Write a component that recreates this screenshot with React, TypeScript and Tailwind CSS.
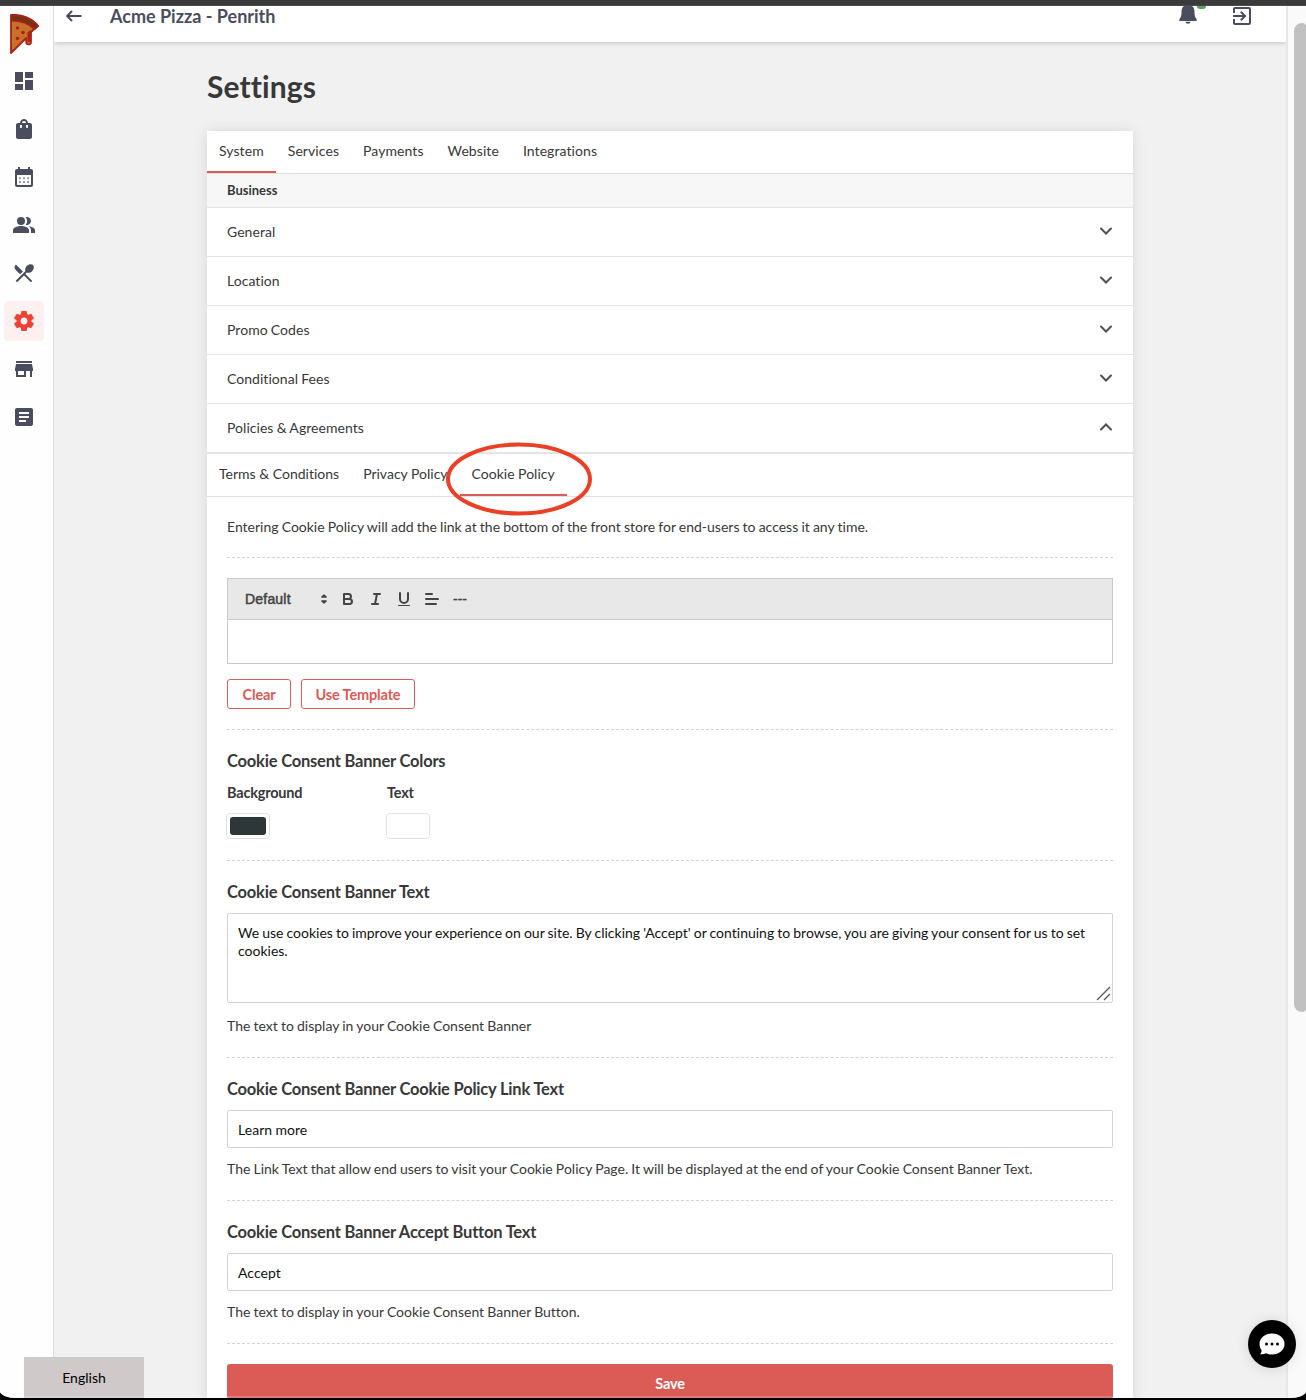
import type { ReactNode } from "react";
import {
  MdArticle,
  MdDashboard,
  MdExitToApp,
  MdPeopleAlt,
  MdRestaurantMenu,
  MdShoppingBag,
  MdStore,
} from "react-icons/md";

function PizzaLogo() {
  return (
    <svg className="h-[40px] w-[30px]" viewBox="0 0 30 40">
      <path d="M1 1C11 0 22 4 28 12L21 18V28A2.4 2.4 0 0 1 16.200 28V24L1 39Z" fill="#c9702a" stroke="#a82418" strokeWidth="1.800" strokeLinejoin="round" />
      <path d="M1.500 1.500C11 1 21 4.500 28 12L24.500 15C18 8.500 11 6.500 1.500 6.500Z" fill="#6d3512" stroke="#a82418" strokeWidth="1.800" />
      <path d="M21 17.500L19 19V28" fill="none" stroke="#a82418" strokeWidth="3" />
      <circle cx="7.500" cy="14" r="1.700" fill="#a82418" />
      <circle cx="13" cy="18.500" r="1.800" fill="#a82418" />
      <circle cx="7.500" cy="24.500" r="1.800" fill="#a82418" />
    </svg>
  );
}

function CalendarIcon({ size }: { size: number }) {
  return (
    <svg width={size} height={size} viewBox="0 0 24 24" fill="currentColor">
      <path fillRule="evenodd" d="M6 2H8V4H16V2H18V4H19A2 2 0 0 1 21 6V20A2 2 0 0 1 19 22H5A2 2 0 0 1 3 20V6A2 2 0 0 1 5 4H6ZM5 10V19.500Q5 20 5.500 20H18.500Q19 20 19 19.500V10Z" />
      <path opacity=".55" d="M7 12.200H9V14.200H7ZM11 12.200H13V14.200H11ZM15 12.200H17V14.200H15ZM7 16H9V18H7ZM11 16H13V18H11ZM15 16H17V18H15Z" />
    </svg>
  );
}

function GearIcon({ size }: { size: number }) {
  return (
    <svg width={size} height={size} viewBox="0 0 24 24" fill="currentColor">
      <path d="M19.500 12c0-.23-.01-.45-.03-.68l1.860-1.410c.4-.3.51-.86.26-1.300l-1.870-3.230a.987.987 0 0 0-1.250-.42l-2.150.91c-.37-.26-.76-.49-1.170-.68l-.29-2.310c-.06-.5-.49-.88-.99-.88h-3.730c-.51 0-.94.38-1 .88l-.29 2.310c-.41.19-.8.42-1.170.68l-2.150-.91c-.46-.2-1-.02-1.250.42L2.410 8.620c-.25.44-.14.99.26 1.300l1.860 1.410a7.343 7.343 0 0 0 0 1.350l-1.860 1.410c-.4.3-.51.86-.26 1.300l1.870 3.230c.25.44.79.62 1.250.42l2.150-.91c.37.26.76.49 1.170.68l.29 2.310c.06.5.49.88.99.88h3.730c.5 0 .93-.38.99-.88l.29-2.310c.41-.19.8-.42 1.170-.68l2.150.91c.46.2 1 .02 1.250-.42l1.870-3.230c.25-.44.14-.99-.26-1.300l-1.860-1.410c.03-.23.04-.45.04-.68zm-7.460 3.500c-1.930 0-3.500-1.570-3.500-3.500s1.570-3.500 3.500-3.500 3.500 1.570 3.500 3.500-1.570 3.500-3.500 3.500z" />
    </svg>
  );
}

const navIcons = [MdDashboard, MdShoppingBag, CalendarIcon, MdPeopleAlt, MdRestaurantMenu, GearIcon, MdStore, MdArticle];

function Sidebar() {
  return (
    <aside className="flex w-[54px] shrink-0 flex-col border-r border-[#dcdcdc] bg-[#fefefe] pt-[8px]">
      <div className="mb-[7px] h-[40px] pl-[10px]"><PizzaLogo /></div>
      <nav className="flex flex-col gap-2 pl-1">
        {navIcons.map((Icon, i) => (
          <a key={i} className={i === 5 ? "flex size-10 items-center justify-center rounded-[4px] bg-[#fdf1f0] text-[#ea4335]" : "flex size-10 items-center justify-center text-[#4a4d5e]"}>
            <Icon size={24} />
          </a>
        ))}
      </nav>
    </aside>
  );
}

function Header() {
  return (
    <header className="relative z-10 flex h-[36px] items-start bg-white text-[#4a4d5e] shadow-[0_1px_5px_rgba(0,0,0,0.2)]">
      <svg className="mt-[2px] ml-[12px] h-4 w-4" viewBox="0 0 16 16" fill="none" stroke="currentColor" strokeWidth="2">
        <path d="M15.500 8H1.500M6 3L1.200 8L6 13" />
      </svg>
      <h2 className="ml-[28px] -mt-px text-[18px] leading-[22px] font-bold [word-spacing:0px]">Acme Pizza - Penrith</h2>
      <div className="relative ml-auto h-6 w-6 overflow-hidden">
        <svg className="absolute -top-px left-[3px]" width="18" height="19" viewBox="0 0 18 21" preserveAspectRatio="none" fill="currentColor">
          <path d="M9 0C4 0 2.500 3.500 2.500 7.500C2.500 11.500 2.200 13 .5 15.500C-.2 17 .2 17.600 1.200 17.600H16.800C17.800 17.600 18.200 17 17.500 15.500C15.800 13 15.500 11.500 15.500 7.500C15.500 3.500 14 0 9 0ZM6.500 18.600A2.500 2.200 0 0 0 11.500 18.600Z" />
        </svg>
      </div>
      <span className="-ml-[3px] h-[3px] w-[9px] rounded-b-full bg-[#59a354]" />
      <MdExitToApp size={24} className="mr-[32px] ml-[24px] -mt-[2px]" />
    </header>
  );
}

function Tabs({ items, active }: { items: string[]; active: number }) {
  return (
    <div className="flex h-[43px] border-b border-[#dfdfdf]">
      {items.map((t, i) => (
        <button key={t} className={i === active ? "h-[42px] border-b-2 border-[#db5b56] px-3 pb-px" : "h-[42px] border-b-2 border-transparent px-3 pb-px"}>
          {t}
        </button>
      ))}
    </div>
  );
}

function Chevron({ up }: { up: boolean }) {
  return (
    <svg width="24" height="24" viewBox="0 0 24 24" fill="none" stroke="#505050" strokeWidth="2" strokeLinecap="round" className={up ? "rotate-180" : ""}>
      <path d="M7 9.500L12 14.500L17 9.500" />
    </svg>
  );
}

function Row({ label, open = false }: { label: string; open?: boolean }) {
  return (
    <div className="flex h-[49px] items-center justify-between border-b border-[#e4e4e4] pr-[15px] pl-5">
      <span className="pb-px leading-5 tracking-[0.04px]">{label}</span>
      <span className="-mt-[2px]"><Chevron up={open} /></span>
    </div>
  );
}

function Editor() {
  return (
    <div className="border border-[#c9c9c9]">
      <div className="flex h-[41px] items-center border-b border-[#c9c9c9] bg-[#e8e8e8] pl-[17px] text-[#444]">
        <span className="w-[70px] font-['Liberation_Sans',sans-serif] text-[14px] tracking-[0.2px] [-webkit-text-stroke:0.5px_#444]">Default</span>
        <svg width="18" height="18" viewBox="0 0 18 18" fill="#444" stroke="#444" strokeWidth="1.400" strokeLinejoin="round" className="mr-[6px]">
          <path d="M6.800 11L9 13L11.200 11ZM6.800 7L9 5L11.200 7Z" />
        </svg>
        <div className="flex gap-[10px]">
          <svg width="18" height="18" viewBox="0 0 18 18" fill="none" stroke="#444" strokeWidth="2">
            <path d="M5 4H9.500A2.500 2.500 0 0 1 9.500 9H5ZM5 9H10.500A2.500 2.500 0 0 1 10.500 14H5Z" strokeLinejoin="round" />
          </svg>
          <svg width="18" height="18" viewBox="0 0 18 18" fill="none" stroke="#444" strokeWidth="2" strokeLinecap="round">
            <path d="M7 4H13M5 14H11M8 14L10 4" />
          </svg>
          <svg width="18" height="18" viewBox="0 0 18 18" fill="none" stroke="#444" strokeWidth="2" strokeLinecap="round">
            <path d="M5 3V9A4 4 0 0 0 13 9V3" />
            <path d="M3.500 15.500H14.500" strokeWidth="1" />
          </svg>
          <svg width="18" height="18" viewBox="0 0 18 18" fill="none" stroke="#444" strokeWidth="2" strokeLinecap="round">
            <path d="M3 9H15M3 14H13M3 4H9" />
          </svg>
          <span className="pl-[2px] font-['Liberation_Sans',sans-serif] text-[14px] leading-[18px] [-webkit-text-stroke:0.3px_#444]">---</span>
        </div>
      </div>
      <div className="h-[43px] bg-white" />
    </div>
  );
}

function Section({ className, children }: { className: string; children: ReactNode }) {
  return <section className={`mx-5 border-b border-dashed border-[#d3d3d3] ${className}`}>{children}</section>;
}

function Title({ children }: { children: ReactNode }) {
  return <h3 className="text-[16.5px] leading-[22px] font-bold tracking-[-0.2px] [word-spacing:0px]">{children}</h3>;
}

function TextField({ title, value, help }: { title: string; value: string; help: string }) {
  return (
    <Section className="h-[143px] pt-5">
      <Title>{title}</Title>
      <div className="mt-[10px] flex h-[38px] items-center rounded-[2px] border border-[#d3d3d3] px-[10px] tracking-[0.05px] text-[#111]">{value}</div>
      <p className="mt-[11px] leading-5">{help}</p>
    </Section>
  );
}

function Swatch({ label, dark = false }: { label: string; dark?: boolean }) {
  return (
    <div className="w-[160px]">
      <div className="text-[14.5px] leading-5 font-bold tracking-[-0.2px]">{label}</div>
      <div className="mt-[10px] -ml-px h-[26px] w-[44px] rounded-[4px] border border-[#e2e2e2] bg-white p-[3px]">
        <div className={dark ? "h-[18px] w-[36px] rounded-[3px] bg-[#2d3639]" : "h-[18px] w-[36px] rounded-[3px] bg-white"} />
      </div>
    </div>
  );
}

function SettingsCard() {
  return (
    <div className="relative mt-[25px] h-[1300px] w-[926px] bg-white shadow-[0_0_14px_rgba(0,0,0,0.1)]">
      <div className="tracking-[0.08px]">
        <Tabs items={["System", "Services", "Payments", "Website", "Integrations"]} active={0} />
      </div>
      <div className="flex h-[34px] items-center border-b border-[#e4e4e4] bg-[#f7f7f7] pl-5 text-[13px] font-bold">Business</div>
      <Row label="General" />
      <Row label="Location" />
      <Row label="Promo Codes" />
      <Row label="Conditional Fees" />
      <Row label="Policies & Agreements" open />
      <div className="border-t border-[#e4e4e4]">
        <Tabs items={["Terms & Conditions", "Privacy Policy", "Cookie Policy"]} active={2} />
      </div>
      <svg className="absolute top-[310px] left-[238px]" width="148" height="76" viewBox="0 0 148 76" fill="none" stroke="#ea4025" strokeWidth="4">
        <ellipse cx="74" cy="38" rx="71" ry="34.500" />
      </svg>
      <Section className="h-[61px] pt-5">
        <p className="leading-5">Entering Cookie Policy will add the link at the bottom of the front store for end-users to access it any time.</p>
      </Section>
      <Section className="h-[172px] pt-5">
        <Editor />
        <div className="mt-[15px] flex gap-[10px] text-[14.5px] font-bold tracking-[-0.15px] text-[#db5b56]">
          <button className="h-[30px] w-[64px] rounded-[3px] border border-[#db5b56] pt-[2px]">Clear</button>
          <button className="h-[30px] w-[114px] rounded-[3px] border border-[#db5b56] pt-[2px]">Use Template</button>
        </div>
      </Section>
      <Section className="h-[131px] pt-5">
        <Title>Cookie Consent Banner Colors</Title>
        <div className="mt-[11px] flex">
          <Swatch label="Background" dark />
          <Swatch label="Text" />
        </div>
      </Section>
      <Section className="h-[197px] pt-5">
        <Title>Cookie Consent Banner Text</Title>
        <div className="relative mt-[10px] h-[90px] rounded-[2px] border border-[#d3d3d3] px-[10px] pt-[10px] leading-[18px] [word-spacing:-0.52px] text-[#111]">
          We use cookies to improve your experience on our site. By clicking 'Accept' or continuing to browse, you are giving your consent for us to set<br />cookies.
          <svg className="absolute right-px bottom-px" width="15" height="15" viewBox="0 0 15 15" stroke="#555" strokeWidth="1.300">
            <path d="M1 14L14 1M8 14L14 8" />
          </svg>
        </div>
        <p className="mt-[13px] leading-5">The text to display in your Cookie Consent Banner</p>
      </Section>
      <TextField title="Cookie Consent Banner Cookie Policy Link Text" value="Learn more" help="The Link Text that allow end users to visit your Cookie Policy Page. It will be displayed at the end of your Cookie Consent Banner Text." />
      <TextField title="Cookie Consent Banner Accept Button Text" value="Accept" help="The text to display in your Cookie Consent Banner Button." />
      <div className="mx-5 mt-5 flex h-[40px] items-center justify-center rounded-[3px] bg-[#db5b56] pb-px text-[14.5px] font-bold tracking-[-0.15px] text-white">Save</div>
    </div>
  );
}

export default function App() {
  return (
    <div className="relative h-[1400px] w-[1306px] overflow-hidden bg-black font-['Lato',sans-serif] text-[14px] text-[#383838] [font-variant-ligatures:no-common-ligatures] [word-spacing:-0.44px]">
      <div className="h-[1398px] overflow-hidden rounded-b-[16px_7px] bg-[#f1f1f1]">
        <div className="h-[6px] border-b border-[#4a4a4a] bg-[#3a3a3a]" />
        <div className="flex h-[1392px]">
          <Sidebar />
          <div className="w-[1232px] overflow-hidden">
            <Header />
            <main className="pt-[24px] pl-[153px]">
              <h1 className="text-[30px] leading-[40px] font-bold tracking-[0.12px]">Settings</h1>
              <SettingsCard />
            </main>
          </div>
          <div className="flex w-[20px] border-l-2 border-[#e7e7e7] bg-[#fafafa] pt-[17px]">
            <div className="ml-[6px] h-[989px] w-3 rounded-l-[8px] rounded-r-[4px] bg-[#c1c1c1]" />
          </div>
        </div>
      </div>
      <div className="absolute top-[1357px] left-[24px] flex h-[41px] w-[120px] items-center justify-center bg-[#cfc9c9] text-black">English</div>
      <div className="absolute inset-x-4 top-[1396px] h-[2px] bg-white/20" />
      <div className="absolute top-[1320px] left-[1248px] flex size-12 items-center justify-center rounded-full bg-black shadow-[0_1px_14px_rgba(0,0,0,0.12)]">
        <svg width="26" height="22" viewBox="0 0 26 22">
          <path d="M13 .5C20 .5 25.500 5 25.500 11S20 21.500 13 21.500C10.800 21.500 8.800 21 7 20.200C5.500 21.200 3.500 21.500 1 21.200C2.200 20 2.700 18.500 2.500 17C1.200 15.300 .5 13.200 .5 11C.5 5 6 .5 13 .5Z" fill="white" />
          <g fill="black">
            <circle cx="7.500" cy="11" r="1.500" /><circle cx="13" cy="11" r="1.500" /><circle cx="18.500" cy="11" r="1.500" />
          </g>
        </svg>
      </div>
    </div>
  );
}
